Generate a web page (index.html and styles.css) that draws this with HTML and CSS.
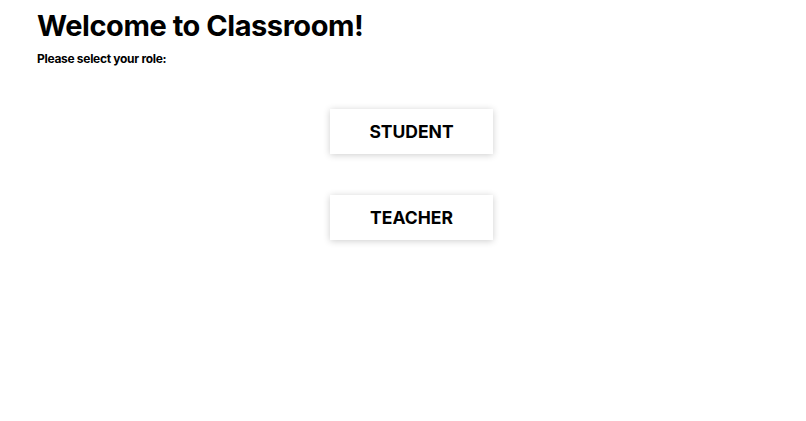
FILE: index.html
```html
<!DOCTYPE html>
<html lang="en">
<head>
<meta charset="utf-8">
<title>Classroom</title>
<link rel="stylesheet" href="styles.css">
</head>
<body>
<main class="page">
  <header class="intro">
    <h1 class="title">Welcome to Classroom!</h1>
    <p class="subtitle">Please select your role:</p>
  </header>
  <div class="roles">
    <button class="role-btn" type="button">STUDENT</button>
    <button class="role-btn" type="button">TEACHER</button>
  </div>
</main>
</body>
</html>
```

FILE: styles.css
```css
html, body {
  margin: 0;
  padding: 0;
  background: #ffffff;
}
body {
  font-family: Inter, "Noto Sans", "Liberation Sans", sans-serif;
  color: #000;
}
.page {
  padding: 0 0 60px 37px;
}
.intro {
  padding-top: 8px;
}
.title {
  margin: 0;
  font-size: 29px;
  font-weight: 700;
  line-height: 36px;
  letter-spacing: -0.45px;
}
.subtitle {
  margin: 7px 0 0;
  font-size: 12px;
  font-weight: 700;
  line-height: 16px;
  letter-spacing: -0.3px;
}
.roles {
  display: flex;
  flex-direction: column;
  align-items: center;
  gap: 41px;
  padding: 42px 0 0 0;
  margin-left: -20px;
}
.role-btn {
  width: 163px;
  height: 45px;
  border: none;
  background: #fff;
  box-shadow: 0 1px 7px rgba(0, 0, 0, 0.2);
  font-family: Inter, "Noto Sans", "Liberation Sans", sans-serif;
  font-size: 17.5px;
  font-weight: 700;
  color: #000;
  padding: 0;
  cursor: pointer;
}
```
